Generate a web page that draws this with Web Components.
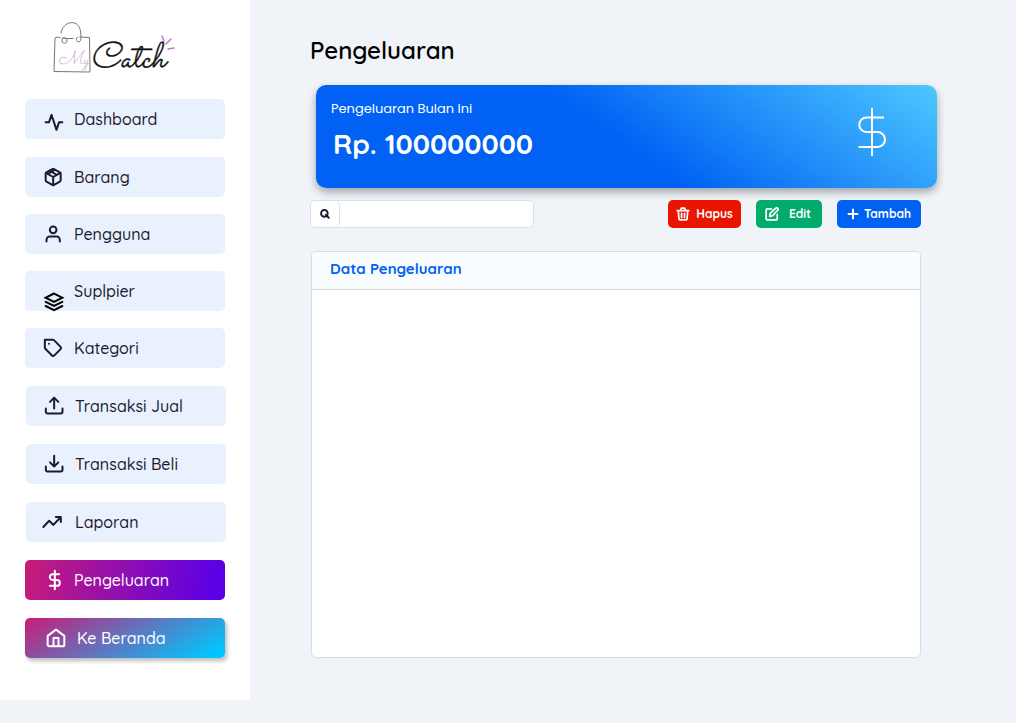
<!DOCTYPE html>
<html lang="id">
<head>
<meta charset="utf-8">
<meta name="viewport" content="width=device-width, initial-scale=1">
<title>Pengeluaran</title>
<style>
  body { margin: 0; background: #f0f3f8; color: #1e1b2e; font-family: Quicksand, Lato, sans-serif; }
</style>
</head>
<body>
<catch-app></catch-app>

<script>
const stroke = (body, width = 2, box = '0 0 24 24') =>
  `<svg viewBox="${box}" fill="none" stroke="currentColor" stroke-width="${width}" stroke-linecap="round" stroke-linejoin="round" aria-hidden="true">${body}</svg>`;

const ICONS = {
  activity: stroke('<path d="M22 12h-4l-3 9L9 3l-3 9H2"/>', 2.4, '0 -4 24 24'),
  box: stroke('<path d="M21 8.2v7.6a2 2 0 0 1-1 1.7l-7 4a2 2 0 0 1-2 0l-7-4a2 2 0 0 1-1-1.7V8.2a2 2 0 0 1 1-1.7l7-4a2 2 0 0 1 2 0l7 4a2 2 0 0 1 1 1.7z"/><path d="M3.3 7 12 12l8.7-5M12 22V12M7.5 4.3l8.7 5M5.5 8.3 14 3.4"/>', 2.4, '1 0 24 24'),
  user: stroke('<path d="M20 21v-2a4 4 0 0 0-4-4H8a4 4 0 0 0-4 4v2"/><circle cx="12" cy="7" r="4"/>', 2.4, '1 0 24 24'),
  layers: stroke('<path d="M12 2 2 7l10 5 10-5-10-5zM2 17l10 5 10-5M2 12l10 5 10-5" stroke-linejoin="miter"/>', 2.4, '0 -1 24 24'),
  tag: stroke('<path d="M2 2h9.5a2 2 0 0 1 1.4.6l8 8a2 2 0 0 1 0 2.8l-7.5 7.5a2 2 0 0 1-2.8 0l-8-8a2 2 0 0 1-.6-1.4z"/><path d="M7 7h.01"/>', 2.4, '1 0 24 24'),
  upload: stroke('<path d="M22 15v4a2 2 0 0 1-2 2H4a2 2 0 0 1-2-2v-4M17 7l-5-5-5 5M12 2v13"/>', 2.4, '1 0 24 24'),
  download: stroke('<path d="M22 15v4a2 2 0 0 1-2 2H4a2 2 0 0 1-2-2v-4M7 10l5 5 5-5M12 2v13"/>', 2.4, '1 0 24 24'),
  trend: stroke('<path d="M22 6l-9 9.5-5-5L1 18M16 6h6v6"/>', 2.4, '3 0 24 24'),
  dollar: stroke('<path d="M12 1v22M17 5H9.5a3.5 3.5 0 0 0 0 7h5a3.5 3.5 0 0 1 0 7H6"/>', 2.4, '-1 0 24 24'),
  home: stroke('<path d="M2 9.5 12 2l10 7.500V20a2 2 0 0 1-2 2H4a2 2 0 0 1-2-2zM9 22V12h6v10"/>', 2.4),
  search: stroke('<circle cx="10.5" cy="10.5" r="8"/><path d="m14 14 7 7"/>', 4.5),
  trash: stroke('<path d="M2 6h20M8 5l1-3h6l1 3M4 7l1 13a2 2 0 0 0 2 2h10a2 2 0 0 0 2-2l1-13M9.5 11v7M14.5 11v7"/>', 3),
  edit: stroke('<path d="M11 3H4a2 2 0 0 0-2 2v15a2 2 0 0 0 2 2h15a2 2 0 0 0 2-2v-7"/><path d="M18.5 2a2.5 2.5 0 0 1 3.5 3.5L13 15l-5 1 1-5z"/>', 3),
  plus: stroke('<path d="M12 3v18M3 12h18"/>', 4),
};

function define(name, markup) {
  const template = document.createElement('template');
  template.innerHTML = markup;
  customElements.define(name, class extends HTMLElement {
    constructor() {
      super();
      this.attachShadow({ mode: 'open' }).append(template.content.cloneNode(true));
    }
    connectedCallback() {
      const slot = this.shadowRoot.querySelector('[data-icon]');
      if (slot) slot.innerHTML = ICONS[this.getAttribute('icon')];
    }
  });
}

define('brand-logo', `
  <style>
    :host { display: block; }
    svg { display: block; width: 150px; height: 75px; }
    text { font-family: Sacramento, Allura, "Great Vibes", "Dancing Script", Lato, sans-serif; font-style: italic; }
  </style>
  <svg viewBox="0 0 150 75" role="img" aria-label="My Catch">
    <g fill="none" stroke="#77757a" stroke-width="1" stroke-linecap="round">
      <path d="M20 27.5C18 27 16 27 15 28L14 61.500 50 62 49.500 27.500 40 27"/>
      <path d="M25 28.500H33M21 23C23 11 37 9 40 19c1 5 2 12-1 13-3 0-4-4-1-5M22 28c2-1 5 0 5 3s-5 3-5 0 1-3 3-3"/>
    </g>
    <g fill="none" stroke="#bd79c9" stroke-width="1.500" stroke-linecap="round">
      <path d="M124 31l-2-5M126 34l5-5M128 39l6-1"/>
    </g>
    <text x="18" y="54" font-size="19" fill="#d3aedb">My</text>
    <text x="50" y="57" font-size="36" fill="#111" stroke="#111" stroke-width=".4">Catch</text>
  </svg>`);

define('nav-item', `
  <style>
    :host { display: block; }
    a { display: flex; align-items: center; gap: 10px; height: 40px; padding-left: 19px; box-sizing: border-box;
        border-radius: 5px; background: #e9f1ff; color: #1e1b2e; font-size: 16px; line-height: 20px; font-weight: 500; text-decoration: none; }
    span { display: block; }
    svg { display: block; width: 20px; height: 20px; overflow: visible; }
    :host([low]) [data-icon] { align-self: flex-end; color: #000; }
    :host([tone="active"]) a { color: #fff; background: linear-gradient(100deg, #c81d77, #5b00e6 94%); }
    :host([tone="home"]) a { color: #fff; background: linear-gradient(150deg, #c81d77, #00c6ff 94%); box-shadow: 2px 3px 4px #0004; padding-left: 21px; gap: 11px; }
  </style>
  <a href="#"><span data-icon></span><span><slot></slot></span></a>`);

define('side-nav', `
  <style>
    :host { display: block; background: #fff; padding-bottom: 42px; }
    brand-logo { padding: 10px 0 14px 40px; }
    nav { display: grid; gap: 18px; padding: 0 25px; }
    .master, .reports, .links { display: grid; gap: 18px; }
    .master { gap: 17px; }
    .master > :first-child { margin-bottom: 1px; }
    .reports { margin: 0 -1px 0 1px; }
  </style>
  <brand-logo></brand-logo>
  <nav aria-label="Menu">
    <div class="master">
      <nav-item icon="activity">Dashboard</nav-item>
      <nav-item icon="box">Barang</nav-item>
      <nav-item icon="user">Pengguna</nav-item>
      <nav-item icon="layers" low>Suplpier</nav-item>
      <nav-item icon="tag">Kategori</nav-item>
    </div>
    <div class="reports">
      <nav-item icon="upload">Transaksi Jual</nav-item>
      <nav-item icon="download">Transaksi Beli</nav-item>
      <nav-item icon="trend">Laporan</nav-item>
    </div>
    <div class="links">
      <nav-item icon="dollar" tone="active">Pengeluaran</nav-item>
      <nav-item icon="home" tone="home">Ke Beranda</nav-item>
    </div>
  </nav>`);

define('summary-card', `
  <style>
    :host { display: flex; align-items: flex-start; justify-content: space-between; padding: 16px 48px 26px 15px;
            border-radius: 10px; color: #fff; box-shadow: 0 4px 8px #0005;
            background: linear-gradient(35deg, #0061f4 48%, #4dc8ff); }
    p { margin: 0; font: 13px/16px Poppins, "Open Sans", sans-serif; }
    strong { display: block; margin: 8px 0 0 2px; font-size: 28px; line-height: 37px; font-weight: 700; }
    svg { display: block; width: 34px; height: 48px; margin-top: 7px; }
  </style>
  <div><p><slot name="label"></slot></p><strong><slot></slot></strong></div>
  <svg viewBox="0 0 34 48" fill="none" stroke="#fff" stroke-width="2" aria-hidden="true">
    <path d="M17 0v48M29 9.5H11.500a7 7 0 0 0 0 14.500h11a7 7 0 0 1 0 15H3.500"/>
  </svg>`);

define('search-box', `
  <style>
    :host { display: block; width: 224px; }
    label { display: flex; height: 28px; box-sizing: border-box; border: 1px solid #d9dfee; border-radius: 5px; background: #fff; overflow: hidden; }
    span { display: grid; place-items: center; width: 28px; border-right: 1px solid #d9dfee; border-radius: 5px; }
    svg { width: 10px; height: 10px; display: block; }
    input { flex: 1; min-width: 0; border: 0; outline: 0; padding: 0 8px; background: none; font: inherit; }
  </style>
  <label><span>${ICONS.search}</span><input type="search" aria-label="Cari"></label>`);

define('action-button', `
  <style>
    :host { display: block; }
    button { display: flex; align-items: center; gap: 6px; height: 28px; padding: 0 8px; border: 0; border-radius: 5px;
             background: var(--tone); color: #fff; font: 700 12px/16px Quicksand, Lato, sans-serif; }
    svg { display: block; width: 14px; height: 14px; }
    :host([icon="edit"]) button { gap: 10px; padding: 0 11px 0 9px; }
    :host([icon="plus"]) button { gap: 5px; padding: 0 10px; }
    :host([icon="plus"]) svg { width: 12px; height: 12px; }
  </style>
  <button type="button"><span data-icon></span><slot></slot></button>`);

define('data-panel', `
  <style>
    :host { display: block; box-sizing: border-box; min-height: 407px; border: 1px solid #d5dbea; border-radius: 5px; background: #fff; overflow: hidden; }
    h2 { margin: 0; padding: 7px 18px 10px; border-bottom: 1px solid #d5dbea; background: #f9fdff; color: #0061f2; font-size: 15px; line-height: 20px; font-weight: 700; }
  </style>
  <h2><slot></slot></h2>`);

define('catch-app', `
  <style>
    :host { display: grid; grid-template-columns: 250px minmax(0, 1fr); align-items: start; }
    main { padding: 34px 95px 65px 60px; }
    h1 { margin: 0; font-size: 24px; line-height: 32px; font-weight: 600; color: #000; }
    summary-card { margin: 19px -16px 12px 6px; }
    .bar { display: flex; justify-content: space-between; }
    .actions { display: flex; gap: 15px; }
    data-panel { margin: 23px 0 0 1px; }
  </style>
  <side-nav></side-nav>
  <main>
    <h1>Pengeluaran</h1>
    <summary-card><span slot="label">Pengeluaran Bulan Ini</span>Rp. 100000000</summary-card>
    <div class="bar">
      <search-box></search-box>
      <div class="actions">
        <action-button icon="trash" style="--tone:#ea1500">Hapus</action-button>
        <action-button icon="edit" style="--tone:#00ab6b">Edit</action-button>
        <action-button icon="plus" style="--tone:#0061f2">Tambah</action-button>
      </div>
    </div>
    <data-panel>Data Pengeluaran</data-panel>
  </main>`);
</script>
</body>
</html>
